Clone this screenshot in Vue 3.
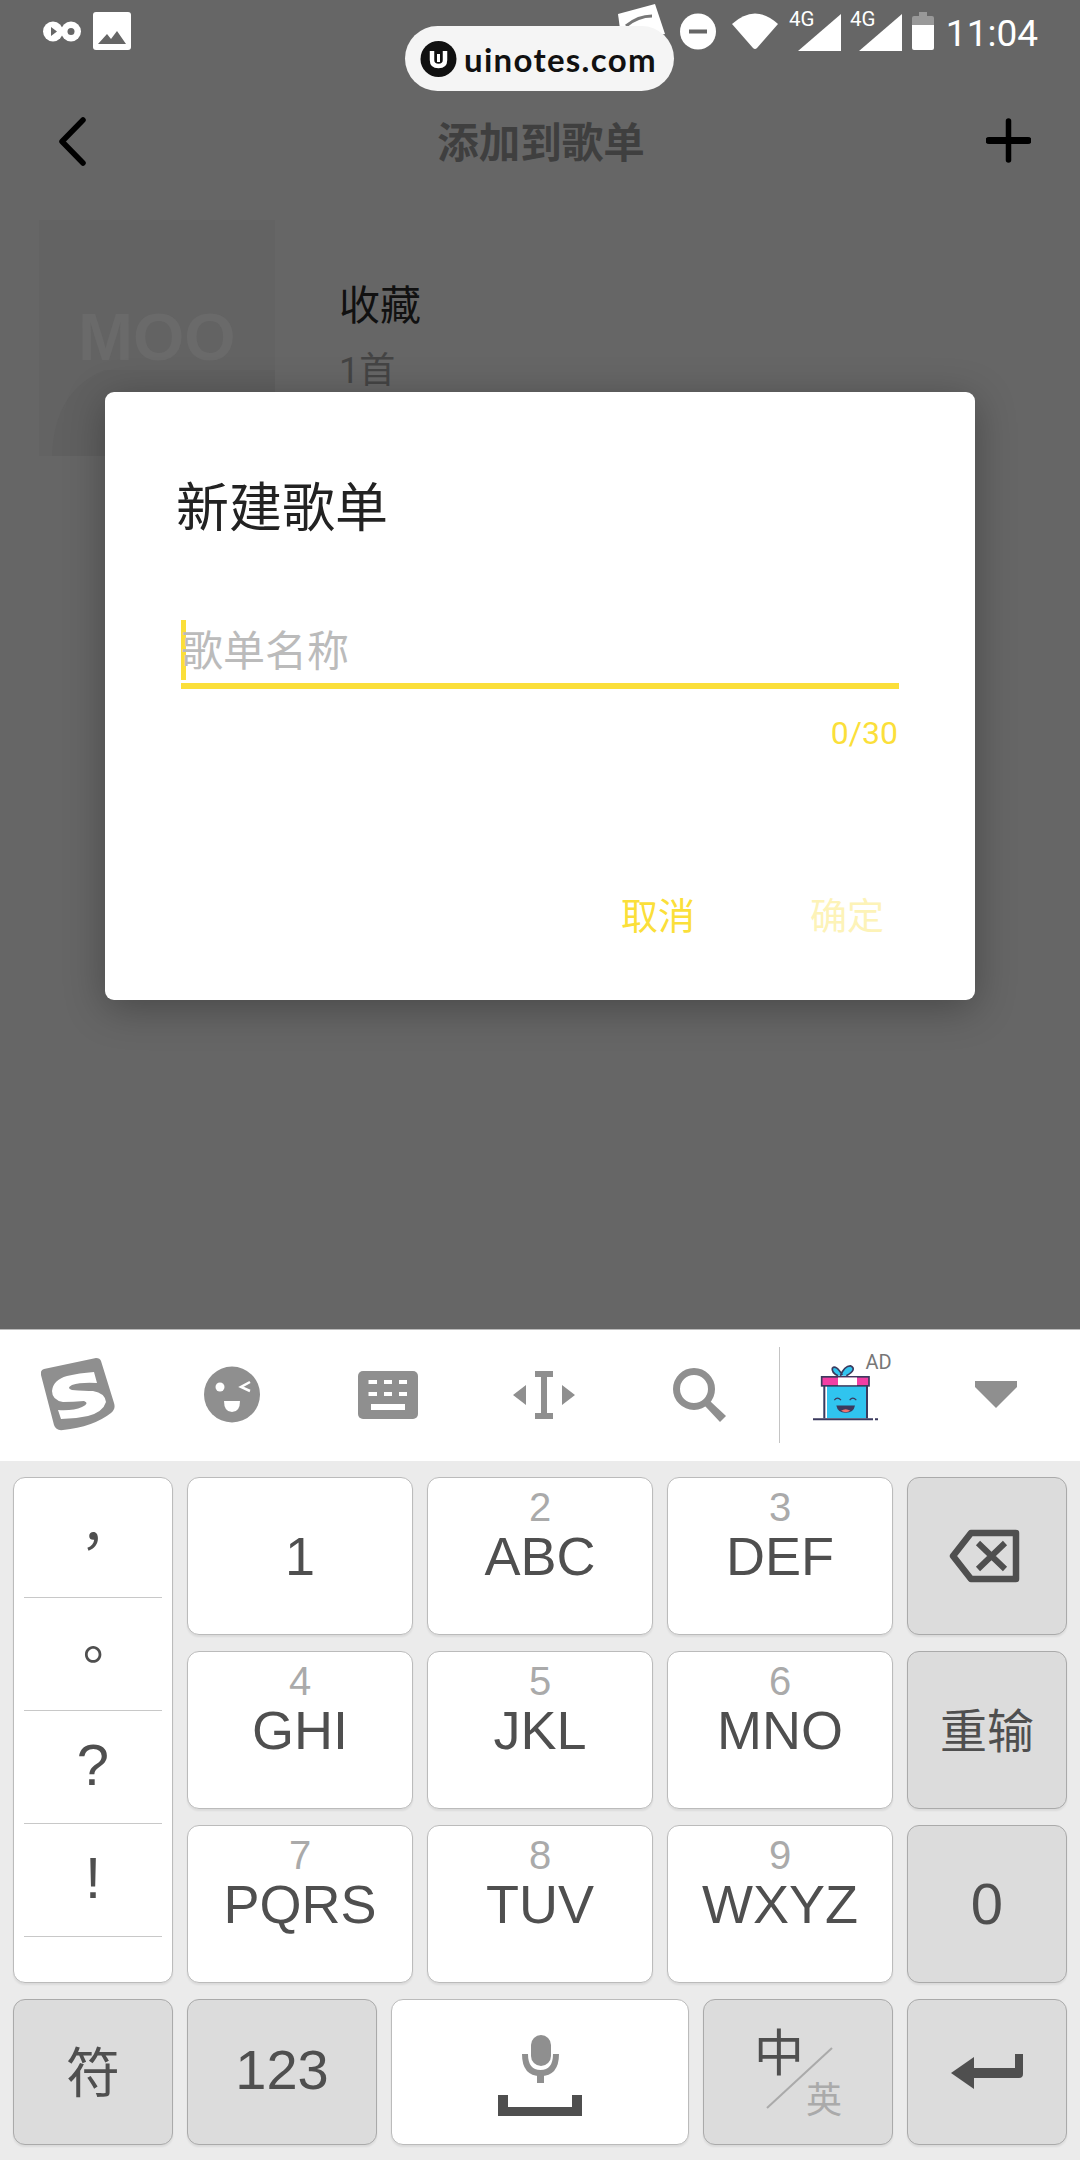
<script setup>
const punctuation = ['，', '。', '?', '!']

const keys = [
  { main: '1' },
  { digit: '2', main: 'ABC' },
  { digit: '3', main: 'DEF' },
  { digit: '4', main: 'GHI' },
  { digit: '5', main: 'JKL' },
  { digit: '6', main: 'MNO' },
  { digit: '7', main: 'PQRS' },
  { digit: '8', main: 'TUV' },
  { digit: '9', main: 'WXYZ' }
]
</script>

<template>
  <div class="screen">
    <div class="page">
      <div class="status">
        <svg class="st-bow" width="38" height="21" viewBox="0 0 38 21">
          <circle cx="10" cy="10.5" r="10" fill="#fff" />
          <circle cx="28" cy="10.5" r="10" fill="#fff" />
          <path d="M8 6l6 4.5-6 4.5z" fill="#666" />
          <circle cx="28" cy="10.5" r="3.5" fill="#666" />
        </svg>
        <svg class="st-img" width="38" height="38" viewBox="0 0 38 38">
          <rect width="38" height="38" rx="3" fill="#fff" />
          <path d="M5 32l9-10 4 5 6-8 9 13z" fill="#666" />
        </svg>
        <div class="st-right">
          <svg class="st-notif" width="47" height="40" viewBox="0 0 47 40">
            <path d="M0 10L37 0l10 30L4 40z" fill="#fff" />
            <path d="M8 22Q20 12 34 12" fill="none" stroke="#777" stroke-width="3" />
          </svg>
          <svg class="st-minus" width="36" height="37" viewBox="0 0 36 37">
            <circle cx="18" cy="18.5" r="18" fill="#fff" />
            <rect x="9" y="16.5" width="18" height="4" fill="#666" />
          </svg>
          <svg class="st-wifi" width="46" height="37" viewBox="0 0 46 37">
            <path d="M0 11Q23-10 46 11L25 35Q23 37 21 35z" fill="#fff" />
          </svg>
          <svg class="st-sig" width="52" height="48" viewBox="0 -8 52 48">
            <text x="0" y="15" class="st-4g">4G</text>
            <path d="M9 40L52 3V40z" fill="#fff" />
          </svg>
          <svg class="st-sig2" width="52" height="48" viewBox="0 -8 52 48">
            <text x="0" y="15" class="st-4g">4G</text>
            <path d="M9 40L52 3V40z" fill="#fff" />
          </svg>
          <svg class="st-bat" width="22" height="38" viewBox="0 0 22 38">
            <path d="M7 0h8v4h5q2 0 2 2v7H0V6q0-2 2-2h5z" fill="#999" />
            <path d="M0 13h22v23q0 2-2 2H2q-2 0-2-2z" fill="#fff" />
          </svg>
          <span class="st-time">11:04</span>
        </div>
      </div>

      <div class="header">
        <svg class="back" width="28" height="49" viewBox="0 0 28 49">
          <path d="M25 3L4 24.5 25 46" fill="none" stroke="#000" stroke-width="5.5" stroke-linecap="round" stroke-linejoin="round" />
        </svg>
        <div class="title">添加到歌单</div>
        <svg class="plus" width="45" height="45" viewBox="0 0 45 45">
          <path d="M22.5 3v39" stroke="#000" stroke-width="5.5" stroke-linecap="round" />
          <path d="M3 22.5h39" stroke="#000" stroke-width="7" stroke-linecap="round" />
        </svg>
      </div>

      <div class="item">
        <div class="cover">
          <svg class="cover-arc" width="236" height="236" viewBox="0 0 236 236">
            <path d="M13 236Q15 170 66 150H236V236z" fill="#606060" />
          </svg>
          <span class="moo">MOO</span>
        </div>
        <div class="item-text">
          <div class="item-name">收藏</div>
          <div class="item-count">1首</div>
        </div>
      </div>
    </div>

    <div class="dialog">
      <div class="dialog-title">新建歌单</div>
      <div class="field">
        <span class="caret"></span>
        <span class="placeholder">歌单名称</span>
      </div>
      <div class="counter">0/30</div>
      <div class="actions">
        <span class="btn">取消</span>
        <span class="btn off">确定</span>
      </div>
    </div>

    <div class="mark">
      <svg width="37" height="36" viewBox="0 0 37 36">
        <circle cx="18.5" cy="18" r="18" fill="#111" />
        <path d="M12 10v9q0 6 6.500 6t6.500-6v-9" fill="none" stroke="#fff" stroke-width="4.500" />
        <path d="M18.500 13v8" stroke="#fff" stroke-width="3" />
      </svg>
      <span class="mark-text">uinotes.com</span>
    </div>

    <div class="keyboard">
      <div class="toolbar">
        <div class="tool">
          <svg width="74" height="73" viewBox="0 0 74 73">
            <path d="M3 11L55 0q4 0 5 3l13 42q2 6-3 10Q52 69 22 72q-7 1-9-5L0 17q-1-5 3-6z" fill="#8f8f8f" />
            <path d="M53 14l3 11Q40 24 31 27q-6 3 0 5 13 1 21 1 12 2 13 11-3 10-18 14-13 3-27 3l-3-9q15 1 24-3 8-4 2-6-11 1-21 1-11-2-11-11 1-11 15-15 12-3 27-4z" fill="#fff" />
          </svg>
        </div>
        <div class="tool">
          <svg class="nudge" width="56" height="57" viewBox="0 0 56 57">
            <circle cx="28" cy="28.5" r="28" fill="#8f8f8f" />
            <circle cx="16" cy="21" r="4.500" fill="#fff" />
            <path d="M46 16l-9 5 9 4" fill="none" stroke="#fff" stroke-width="2.500" />
            <path d="M20 35h16q0 11-8 11t-8-11z" fill="#fff" />
          </svg>
        </div>
        <div class="tool">
          <svg class="nudge" width="60" height="48" viewBox="0 0 60 48">
            <rect width="60" height="48" rx="5" fill="#8f8f8f" />
            <path d="M10.500 9H19v4h-8.500zM26 9h8v4h-8zM41 9h8v4h-8zM10.500 21H19v4h-8.500zM26 21h8v4h-8zM41 21h8v4h-8zM13 33h34v6H13z" fill="#fff" />
          </svg>
        </div>
        <div class="tool">
          <svg width="62" height="48" viewBox="0 0 62 48">
            <path d="M0 24l13-10v20zM62 24L49 14v20zM22 0h18v6h-6v36h6v6H22v-6h6V6h-6z" fill="#8f8f8f" />
          </svg>
        </div>
        <div class="tool">
          <svg width="53" height="54" viewBox="0 0 53 54">
            <circle cx="21" cy="21" r="17.500" fill="none" stroke="#8f8f8f" stroke-width="7" />
            <path d="M37 33l16 15-6 6-15-16z" fill="#8f8f8f" />
          </svg>
        </div>
        <div class="tool-sep"></div>
        <div class="tool gift">
          <svg width="65" height="57" viewBox="40 60 195 170">
            <path d="M115 95Q95 85 98 72q10-12 30 20M122 95q12-30 30-30 22 10-12 30" fill="#30c4ef" stroke="#3b3a5e" stroke-width="5" />
            <rect x="72" y="122" width="132" height="100" fill="#30c4ef" />
            <rect x="72" y="122" width="10" height="100" fill="#fff" />
            <path d="M74 125v97M202 125v97" stroke="#3b3a5e" stroke-width="6" />
            <rect x="66" y="98" width="142" height="27" fill="#f23ea4" stroke="#3b3a5e" stroke-width="5" />
            <rect x="115" y="100" width="57" height="23" fill="#fff" />
            <path d="M104 168q9-12 20 0M150 168q9-12 20 0" fill="none" stroke="#3b3a5e" stroke-width="3.500" />
            <path d="M110 184h56q-4 22-28 22t-28-22z" fill="#3b3a5e" />
            <path d="M124 200q14-10 28 0-14 8-28 0z" fill="#f0726f" />
            <path d="M40 225h180M226 225h10" stroke="#3b3a5e" stroke-width="6" />
          </svg>
          <span class="ad">AD</span>
        </div>
        <div class="tool arrow">
          <svg width="42" height="27" viewBox="0 0 42 27">
            <path d="M0 0h42v6L21 27 0 6z" fill="#8f8f8f" />
          </svg>
        </div>
      </div>

      <div class="keys">
        <div class="key punct">
          <div v-for="p in punctuation" :key="p" class="punct-cell">
            <span :class="p === '，' || p === '。' ? 'cjk-mark' : ''">{{ p }}</span>
          </div>
        </div>

        <template v-for="(k, i) in keys" :key="k.main">
          <div class="key letter" :class="{ single: !k.digit }">
            <span v-if="k.digit" class="digit">{{ k.digit }}</span>
            <span class="main">{{ k.main }}</span>
          </div>
          <div v-if="i === 2" class="key side">
            <svg class="del" width="71" height="54" viewBox="0 0 71 54">
              <path d="M22 4h45v46H22L4 27z" fill="none" stroke="#4f4f4f" stroke-width="6.500" stroke-linejoin="round" />
              <path d="M29 14l27 26M56 14L29 40" stroke="#4f4f4f" stroke-width="6" />
            </svg>
          </div>
          <div v-if="i === 5" class="key side cn">重输</div>
          <div v-if="i === 8" class="key side"><span class="main zero">0</span></div>
        </template>
      </div>

      <div class="bottom">
        <div class="key side w160 cn fu">符</div>
        <div class="key side w190"><span class="main num">123</span></div>
        <div class="key w298 space">
          <svg width="37" height="48" viewBox="0 0 37 48">
            <rect x="9" y="0" width="20" height="31" rx="10" fill="#8f8f8f" />
            <path d="M3 19q0 19 15.500 19T34 19" fill="none" stroke="#8f8f8f" stroke-width="6" />
            <rect x="15" y="36" width="7" height="12" fill="#8f8f8f" />
          </svg>
          <svg width="84" height="21" viewBox="0 0 84 21">
            <path d="M0 0h10v12h64V0h10v21H0z" fill="#4f4f4f" />
          </svg>
        </div>
        <div class="key side w190 lang">
          <span class="lang-zh">中</span>
          <svg class="lang-slash" width="67" height="62" viewBox="0 0 67 62">
            <path d="M66 1L1 61" stroke="#aaa" stroke-width="2" />
          </svg>
          <span class="lang-en">英</span>
        </div>
        <div class="key side w160">
          <svg width="72" height="36" viewBox="0 0 72 36">
            <path d="M0 19L23 3v11h41V0h8v20q0 4-4 4H23v11z" fill="#4f4f4f" />
          </svg>
        </div>
      </div>
    </div>
  </div>
</template>

<style>
body {
  margin: 0;
}
</style>

<style scoped>
.screen {
  position: relative;
  width: 1080px;
  height: 2160px;
  overflow: hidden;
  display: flex;
  flex-direction: column;
  font-family: "Noto Sans CJK SC", "Noto Sans", sans-serif;
}

.page {
  height: 1329px;
  background: #666;
}

.status {
  height: 62px;
  display: flex;
  align-items: center;
  padding-left: 43px;
}
.st-img {
  margin-left: 12px;
}
.st-right {
  margin-left: auto;
  padding-right: 42px;
  display: flex;
  align-items: center;
}
.st-notif {
  margin-right: 15px;
  margin-top: -14px;
}
.st-wifi {
  margin-left: 16px;
}
.st-sig {
  margin-left: 11px;
  margin-top: -8px;
}
.st-sig2 {
  margin-left: 9px;
  margin-top: -8px;
}
.st-bat {
  margin-left: 10px;
}
.st-4g {
  font-family: Roboto, sans-serif;
  font-size: 20.500px;
  fill: #fff;
}
.st-time {
  margin-left: 12px;
  margin-top: 6px;
  font-family: Roboto, sans-serif;
  font-size: 37px;
  line-height: 44px;
  color: #fff;
}

.header {
  height: 158px;
  display: grid;
  grid-template-columns: 1fr auto 1fr;
  align-items: center;
  padding: 0 49px 0 51px;
}
.back {
  margin-left: 7px;
}
.title {
  margin-top: -2px;
  font-size: 41.500px;
  font-weight: 700;
  color: #3f3f3f;
  line-height: 60px;
}
.plus {
  justify-self: end;
  margin-top: -2px;
}

.item {
  display: flex;
  align-items: center;
  padding-left: 39px;
  gap: 64px;
}
.cover {
  position: relative;
  width: 236px;
  height: 236px;
  background: #636363;
  overflow: hidden;
}
.cover-arc {
  position: absolute;
  left: 0;
  top: 0;
}
.moo {
  position: absolute;
  left: 39px;
  top: 81px;
  font-family: "Liberation Sans", sans-serif;
  font-weight: 700;
  font-size: 66px;
  line-height: 72px;
  color: #6a6a6a;
}
.item-text {
  margin-top: -6px;
}
.item-name {
  font-size: 41px;
  line-height: 56px;
  color: #111;
}
.item-count {
  margin-top: 16px;
  font-family: Roboto, "Noto Sans CJK SC", sans-serif;
  font-size: 36px;
  line-height: 50px;
  color: #444;
}

.dialog {
  position: absolute;
  left: 105px;
  top: 392px;
  width: 870px;
  height: 608px;
  box-sizing: border-box;
  padding: 77px 76px 0;
  background: #fff;
  border-radius: 9px;
  box-shadow: 0 8px 40px rgba(0, 0, 0, 0.3);
}
.dialog-title {
  font-size: 53px;
  line-height: 70px;
  color: #222;
  margin-left: -5px;
}
.field {
  margin-top: 81px;
  height: 63px;
  display: flex;
  align-items: center;
  border-bottom: 6px solid #fbdf3a;
}
.caret {
  width: 5px;
  height: 60px;
  margin-top: -4px;
  margin-right: -5px;
  background: #fbdf3a;
}
.placeholder {
  margin-top: -8px;
  font-size: 42px;
  line-height: 60px;
  color: #bbb;
}
.counter {
  margin-top: 24px;
  margin-right: 1px;
  text-align: right;
  font-family: Roboto, sans-serif;
  font-size: 32px;
  line-height: 40px;
  color: #fbdf3a;
}
.actions {
  margin-top: 136px;
  margin-right: 15px;
  display: flex;
  justify-content: flex-end;
  gap: 115px;
}
.btn {
  font-size: 37px;
  line-height: 50px;
  color: #fbdf3a;
}
.btn.off {
  color: #fdf3b8;
}

.mark {
  position: absolute;
  left: 405px;
  top: 26px;
  width: 269px;
  height: 65px;
  box-sizing: border-box;
  padding-left: 15px;
  display: flex;
  align-items: center;
  gap: 7px;
  background: #f5f5f5;
  border-radius: 33px;
}
.mark-text {
  font-family: Lato, sans-serif;
  font-weight: 700;
  font-size: 33px;
  letter-spacing: 1.300px;
  color: #111;
}

.keyboard {
  flex: 1;
  background: #ebebeb;
  border-top: 1px solid #bbb;
}

.toolbar {
  box-sizing: border-box;
  height: 131px;
  padding-bottom: 2px;
  display: flex;
  align-items: center;
  background: #fff;
}
.tool {
  width: 155.500px;
  display: flex;
  justify-content: center;
  align-items: center;
}
.nudge {
  margin-right: 2px;
}
.tool-sep {
  width: 1px;
  height: 96px;
  margin-left: 1px;
  background: #c4c4c4;
}
.tool.gift {
  position: relative;
  width: 132px;
  margin-top: -4px;
}
.tool.arrow {
  width: 168px;
}
.ad {
  position: absolute;
  left: 86px;
  top: -14px;
  font-family: Roboto, sans-serif;
  font-size: 20px;
  line-height: 24px;
  color: #777;
}

.keys {
  display: grid;
  grid-template-columns: 160px 226px 226px 226px 160px;
  grid-template-rows: repeat(3, 158px);
  gap: 16px 14px;
  padding: 16px 13px 0;
}
.bottom {
  display: flex;
  gap: 14px;
  height: 146px;
  padding: 16px 13px 0;
}

.key {
  box-sizing: border-box;
  border: 1px solid #bbb;
  border-radius: 12px;
  background: #fff;
  box-shadow: 0 2px 2px rgba(0, 0, 0, 0.07);
  color: #4f4f4f;
  font-family: "Liberation Sans", "Noto Sans CJK SC", sans-serif;
  display: flex;
  align-items: center;
  justify-content: center;
}
.main {
  font-size: 54px;
  line-height: 54px;
}
.main.zero {
  font-size: 58px;
}
.main.num {
  font-size: 56px;
  margin-top: -4px;
}
.side {
  background: #dcdcdc;
  border-color: #aaa;
}
.cn {
  font-family: "Noto Sans CJK SC", sans-serif;
  font-size: 47px;
  padding-bottom: 6px;
}
.cn.fu {
  font-size: 54px;
}
.del {
  margin-right: 5px;
}
.w160 {
  width: 160px;
}
.w190 {
  width: 190px;
}
.w298 {
  width: 298px;
}

.letter {
  flex-direction: column;
  justify-content: flex-start;
  padding-top: 9px;
}
.letter.single {
  justify-content: center;
  padding-top: 0;
}
.digit {
  font-size: 40px;
  line-height: 40px;
  color: #aaa;
  margin-bottom: 2px;
}

.punct {
  grid-row: span 3;
  flex-direction: column;
  justify-content: flex-start;
  align-items: stretch;
  padding: 0 10px;
}
.punct-cell {
  box-sizing: border-box;
  height: 113px;
  padding-bottom: 6px;
  border-bottom: 1px solid #c8c8c8;
  display: flex;
  align-items: center;
  justify-content: center;
  font-size: 58px;
}
.punct-cell:first-child {
  height: 120px;
  padding-bottom: 0;
}
.cjk-mark {
  font-family: "Noto Sans CJK TC", sans-serif;
  font-size: 54px;
}

.space {
  flex-direction: column;
  gap: 12px;
  padding-top: 6px;
}

.lang {
  position: relative;
}
.lang-zh {
  position: absolute;
  left: 50px;
  top: 17px;
  font-family: "Noto Sans CJK SC", sans-serif;
  font-size: 50px;
  line-height: 64px;
}
.lang-slash {
  position: absolute;
  left: 62px;
  top: 47px;
}
.lang-en {
  position: absolute;
  left: 102px;
  top: 74px;
  font-family: "Noto Sans CJK SC", sans-serif;
  font-size: 36px;
  line-height: 46px;
  color: #aaa;
}
</style>
